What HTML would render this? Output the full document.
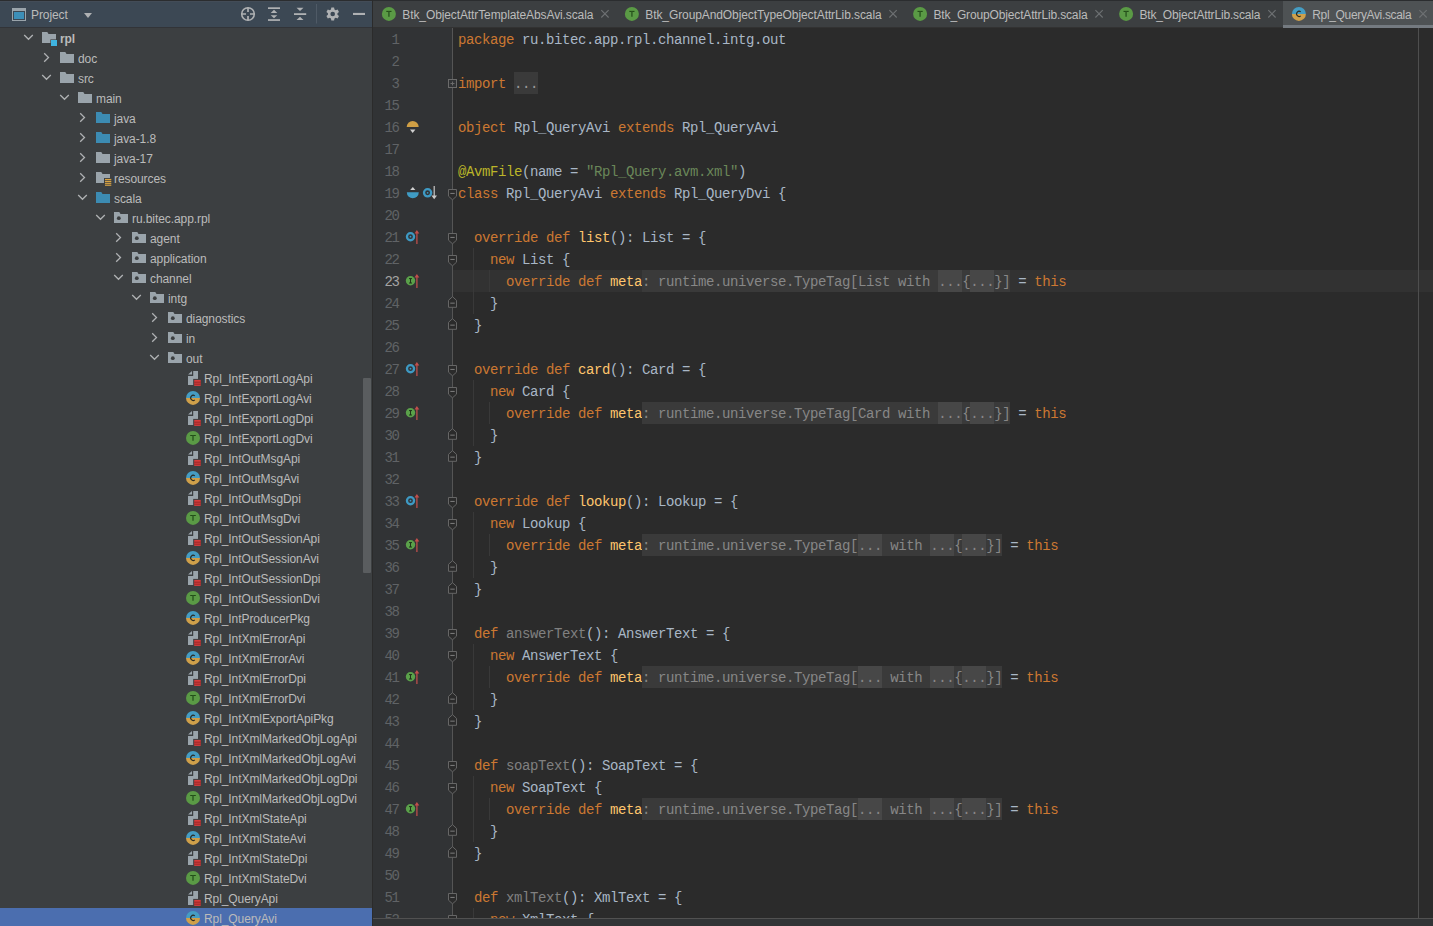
<!DOCTYPE html>
<html><head><meta charset="utf-8"><style>
*{margin:0;padding:0;box-sizing:border-box}
html,body{width:1433px;height:926px;overflow:hidden;background:#2b2b2b}
body{position:relative;font-family:"Liberation Sans",sans-serif}
.a{position:absolute}
.t{position:absolute;white-space:pre;font-size:12px;line-height:20px;color:#bbbbbb;letter-spacing:-0.08px}
.c{position:absolute;white-space:pre;font-family:"Liberation Mono",monospace;font-size:14px;letter-spacing:-0.4px;line-height:22px;color:#a9b7c6}
.ln{position:absolute;white-space:pre;font-family:"Liberation Mono",monospace;font-size:14px;letter-spacing:-1.3px;line-height:22px;color:#606366;text-align:right;width:40px}
.k{color:#cc7832} .m{color:#ffc66d} .u{color:#808080} .s{color:#6a8759} .an{color:#bbb529}
.ih{color:#878787;background:#3a3a3a}
.fd{color:#878787;background:#474747}
.fd0{color:#9a9a9a;background:#3a3a3a}
svg{position:absolute;overflow:visible}

.ih,.fd,.fd0{display:inline-block;height:21px;vertical-align:top}
.ih{box-shadow:0 -1px 0 #3a3a3a} .fd{box-shadow:0 -1px 0 #474747} .fd0{box-shadow:0 -1px 0 #3a3a3a}
</style></head><body>
<div class="a" style="left:0;top:0;width:372px;height:926px;background:#3c3f41"></div>
<div class="a" style="left:0;top:0;width:1433px;height:1px;background:#2b2d2f"></div>
<div class="a" style="left:0;top:1px;width:372px;height:26px;background:#3c4854"></div>
<div class="a" style="left:0;top:1px;width:372px;height:1px;background:#434c57"></div>
<div class="a" style="left:0;top:27px;width:372px;height:1px;background:#323438"></div>
<svg style="left:0;top:0" width="372" height="28">
<rect x="12.5" y="8.5" width="13" height="12" fill="none" stroke="#9aa4ab" stroke-width="1"/>
<rect x="12" y="8" width="14" height="3" fill="#9aa4ab"/>
<rect x="14" y="12" width="10" height="7" fill="#3d8fb8"/>
<path d="M84 13 L92 13 L88 18 Z" fill="#afb1b3"/>
<circle cx="248" cy="14" r="6.3" fill="none" stroke="#afb1b3" stroke-width="1.6"/>
<path d="M248 7.5 V12 M248 16 V20.5 M241.5 14 H246 M250 14 H254.5" stroke="#afb1b3" stroke-width="1.7"/>
<rect x="268" y="7.3" width="12" height="1.7" fill="#afb1b3"/>
<rect x="268" y="19.2" width="12" height="1.7" fill="#afb1b3"/>
<path d="M270.7 12.9 L274 9.8 L277.3 12.9 Z M270.7 15.2 L277.3 15.2 L274 18.3 Z" fill="#afb1b3"/>
<rect x="294" y="13.2" width="12.2" height="1.8" fill="#afb1b3"/>
<path d="M296.5 7.8 L303.5 7.8 L300 11 Z M296.5 20 L303.5 20 L300 16.7 Z" fill="#afb1b3"/>
<rect x="316" y="4" width="1" height="19.5" fill="#4f5a66"/>
<path fill="#afb1b3" fill-rule="evenodd" d=""/>
<rect x="353" y="12.9" width="12" height="2.1" fill="#afb1b3"/>
</svg>
<div class="t" style="left:31px;top:5px;color:#bbbbbb">Project</div>
<svg style="left:0;top:0" width="372" height="28"><path fill="#afb1b3" fill-rule="evenodd" d="M339.16 12.63 L339.16 15.37 L337.16 15.77 L336.46 16.98 L337.12 18.90 L334.74 20.28 L333.40 18.75 L332.00 18.75 L330.66 20.28 L328.28 18.90 L328.94 16.98 L328.24 15.77 L326.24 15.37 L326.24 12.63 L328.24 12.23 L328.94 11.02 L328.28 9.10 L330.66 7.72 L332.00 9.25 L333.40 9.25 L334.74 7.72 L337.12 9.10 L336.46 11.02 L337.16 12.23 Z M335.00 14 A2.3 2.3 0 1 0 330.40 14 A2.3 2.3 0 1 0 335.00 14 Z" transform="rotate(-90 332.7 14)"/></svg>
<div class="a" style="left:0;top:908px;width:372px;height:20px;background:#4b6eaf"></div>
<div class="t" style="left:60px;top:29px;font-weight:bold;">rpl</div>
<div class="t" style="left:78px;top:49px;">doc</div>
<div class="t" style="left:78px;top:69px;">src</div>
<div class="t" style="left:96px;top:89px;">main</div>
<div class="t" style="left:114px;top:109px;">java</div>
<div class="t" style="left:114px;top:129px;">java-1.8</div>
<div class="t" style="left:114px;top:149px;">java-17</div>
<div class="t" style="left:114px;top:169px;">resources</div>
<div class="t" style="left:114px;top:189px;">scala</div>
<div class="t" style="left:132px;top:209px;">ru.bitec.app.rpl</div>
<div class="t" style="left:150px;top:229px;">agent</div>
<div class="t" style="left:150px;top:249px;">application</div>
<div class="t" style="left:150px;top:269px;">channel</div>
<div class="t" style="left:168px;top:289px;">intg</div>
<div class="t" style="left:186px;top:309px;">diagnostics</div>
<div class="t" style="left:186px;top:329px;">in</div>
<div class="t" style="left:186px;top:349px;">out</div>
<div class="t" style="left:204px;top:369px;">Rpl_IntExportLogApi</div>
<div class="t" style="left:204px;top:389px;">Rpl_IntExportLogAvi</div>
<div class="t" style="left:204px;top:409px;">Rpl_IntExportLogDpi</div>
<div class="t" style="left:204px;top:429px;">Rpl_IntExportLogDvi</div>
<div class="t" style="left:204px;top:449px;">Rpl_IntOutMsgApi</div>
<div class="t" style="left:204px;top:469px;">Rpl_IntOutMsgAvi</div>
<div class="t" style="left:204px;top:489px;">Rpl_IntOutMsgDpi</div>
<div class="t" style="left:204px;top:509px;">Rpl_IntOutMsgDvi</div>
<div class="t" style="left:204px;top:529px;">Rpl_IntOutSessionApi</div>
<div class="t" style="left:204px;top:549px;">Rpl_IntOutSessionAvi</div>
<div class="t" style="left:204px;top:569px;">Rpl_IntOutSessionDpi</div>
<div class="t" style="left:204px;top:589px;">Rpl_IntOutSessionDvi</div>
<div class="t" style="left:204px;top:609px;">Rpl_IntProducerPkg</div>
<div class="t" style="left:204px;top:629px;">Rpl_IntXmlErrorApi</div>
<div class="t" style="left:204px;top:649px;">Rpl_IntXmlErrorAvi</div>
<div class="t" style="left:204px;top:669px;">Rpl_IntXmlErrorDpi</div>
<div class="t" style="left:204px;top:689px;">Rpl_IntXmlErrorDvi</div>
<div class="t" style="left:204px;top:709px;">Rpl_IntXmlExportApiPkg</div>
<div class="t" style="left:204px;top:729px;">Rpl_IntXmlMarkedObjLogApi</div>
<div class="t" style="left:204px;top:749px;">Rpl_IntXmlMarkedObjLogAvi</div>
<div class="t" style="left:204px;top:769px;">Rpl_IntXmlMarkedObjLogDpi</div>
<div class="t" style="left:204px;top:789px;">Rpl_IntXmlMarkedObjLogDvi</div>
<div class="t" style="left:204px;top:809px;">Rpl_IntXmlStateApi</div>
<div class="t" style="left:204px;top:829px;">Rpl_IntXmlStateAvi</div>
<div class="t" style="left:204px;top:849px;">Rpl_IntXmlStateDpi</div>
<div class="t" style="left:204px;top:869px;">Rpl_IntXmlStateDvi</div>
<div class="t" style="left:204px;top:889px;">Rpl_QueryApi</div>
<div class="t" style="left:204px;top:909px;">Rpl_QueryAvi</div>
<svg style="left:0;top:0" width="372" height="926"><path d="M24.2 35.0 L28.5 39.3 L32.8 35.0" fill="none" stroke="#afb1b3" stroke-width="1.3"/><g transform="translate(41,30)"><path d="M1 2 H6.3 L7.5 4 H15 V13 H1 Z" fill="#9aa4ab"/><rect x="9.4" y="9.4" width="7" height="7" fill="#3c3f41"/><rect x="10" y="10" width="6" height="6" fill="#3fb4e0"/></g><path d="M44.2 53.2 L48.5 57.5 L44.2 61.8" fill="none" stroke="#afb1b3" stroke-width="1.3"/><g transform="translate(59,50)"><path d="M1 2 H6.3 L7.5 4 H15 V13 H1 Z" fill="#9aa4ab"/></g><path d="M42.2 75.0 L46.5 79.3 L50.8 75.0" fill="none" stroke="#afb1b3" stroke-width="1.3"/><g transform="translate(59,70)"><path d="M1 2 H6.3 L7.5 4 H15 V13 H1 Z" fill="#9aa4ab"/></g><path d="M60.2 95.0 L64.5 99.3 L68.8 95.0" fill="none" stroke="#afb1b3" stroke-width="1.3"/><g transform="translate(77,90)"><path d="M1 2 H6.3 L7.5 4 H15 V13 H1 Z" fill="#9aa4ab"/></g><path d="M80.2 113.2 L84.5 117.5 L80.2 121.8" fill="none" stroke="#afb1b3" stroke-width="1.3"/><g transform="translate(95,110)"><path d="M1 2 H6.3 L7.5 4 H15 V13 H1 Z" fill="#3c8bb2"/></g><path d="M80.2 133.2 L84.5 137.5 L80.2 141.8" fill="none" stroke="#afb1b3" stroke-width="1.3"/><g transform="translate(95,130)"><path d="M1 2 H6.3 L7.5 4 H15 V13 H1 Z" fill="#3c8bb2"/></g><path d="M80.2 153.2 L84.5 157.5 L80.2 161.8" fill="none" stroke="#afb1b3" stroke-width="1.3"/><g transform="translate(95,150)"><path d="M1 2 H6.3 L7.5 4 H15 V13 H1 Z" fill="#9aa4ab"/></g><path d="M80.2 173.2 L84.5 177.5 L80.2 181.8" fill="none" stroke="#afb1b3" stroke-width="1.3"/><g transform="translate(95,170)"><path d="M1 2 H6.3 L7.5 4 H15 V13 H1 Z" fill="#9aa4ab"/><rect x="9" y="8" width="8" height="9" fill="#3c3f41"/><rect x="10" y="8.9" width="6.3" height="1.2" fill="#d9a343"/><rect x="10" y="10.8" width="6.3" height="1.2" fill="#d9a343"/><rect x="10" y="12.7" width="6.3" height="1.2" fill="#d9a343"/><rect x="10" y="14.6" width="6.3" height="1.2" fill="#d9a343"/></g><path d="M78.2 195.0 L82.5 199.3 L86.8 195.0" fill="none" stroke="#afb1b3" stroke-width="1.3"/><g transform="translate(95,190)"><path d="M1 2 H6.3 L7.5 4 H15 V13 H1 Z" fill="#3c8bb2"/></g><path d="M96.2 215.0 L100.5 219.3 L104.8 215.0" fill="none" stroke="#afb1b3" stroke-width="1.3"/><g transform="translate(113,210)"><path d="M1 2 H6.3 L7.5 4 H15 V13 H1 Z" fill="#9aa4ab"/><circle cx="5.8" cy="8.2" r="1.9" fill="#3c3f41"/></g><path d="M116.2 233.2 L120.5 237.5 L116.2 241.8" fill="none" stroke="#afb1b3" stroke-width="1.3"/><g transform="translate(131,230)"><path d="M1 2 H6.3 L7.5 4 H15 V13 H1 Z" fill="#9aa4ab"/><circle cx="5.8" cy="8.2" r="1.9" fill="#3c3f41"/></g><path d="M116.2 253.2 L120.5 257.5 L116.2 261.8" fill="none" stroke="#afb1b3" stroke-width="1.3"/><g transform="translate(131,250)"><path d="M1 2 H6.3 L7.5 4 H15 V13 H1 Z" fill="#9aa4ab"/><circle cx="5.8" cy="8.2" r="1.9" fill="#3c3f41"/></g><path d="M114.2 275.0 L118.5 279.3 L122.8 275.0" fill="none" stroke="#afb1b3" stroke-width="1.3"/><g transform="translate(131,270)"><path d="M1 2 H6.3 L7.5 4 H15 V13 H1 Z" fill="#9aa4ab"/><circle cx="5.8" cy="8.2" r="1.9" fill="#3c3f41"/></g><path d="M132.2 295.0 L136.5 299.3 L140.8 295.0" fill="none" stroke="#afb1b3" stroke-width="1.3"/><g transform="translate(149,290)"><path d="M1 2 H6.3 L7.5 4 H15 V13 H1 Z" fill="#9aa4ab"/><circle cx="5.8" cy="8.2" r="1.9" fill="#3c3f41"/></g><path d="M152.2 313.2 L156.5 317.5 L152.2 321.8" fill="none" stroke="#afb1b3" stroke-width="1.3"/><g transform="translate(167,310)"><path d="M1 2 H6.3 L7.5 4 H15 V13 H1 Z" fill="#9aa4ab"/><circle cx="5.8" cy="8.2" r="1.9" fill="#3c3f41"/></g><path d="M152.2 333.2 L156.5 337.5 L152.2 341.8" fill="none" stroke="#afb1b3" stroke-width="1.3"/><g transform="translate(167,330)"><path d="M1 2 H6.3 L7.5 4 H15 V13 H1 Z" fill="#9aa4ab"/><circle cx="5.8" cy="8.2" r="1.9" fill="#3c3f41"/></g><path d="M150.2 355.0 L154.5 359.3 L158.8 355.0" fill="none" stroke="#afb1b3" stroke-width="1.3"/><g transform="translate(167,350)"><path d="M1 2 H6.3 L7.5 4 H15 V13 H1 Z" fill="#9aa4ab"/><circle cx="5.8" cy="8.2" r="1.9" fill="#3c3f41"/></g><g transform="translate(185,370)"><path d="M8.2 1 H13 V15 H3 V5.9 H8.2 Z" fill="#9aa4ab"/><path d="M3.1 4.6 L7 1 V4.6 Z" fill="#9aa4ab"/><rect x="8.2" y="8.9" width="8.4" height="8" fill="#3c3f41"/><rect x="9.2" y="9.9" width="6.5" height="6" fill="#d83b3b"/><rect x="9.2" y="11.7" width="6.5" height="0.9" fill="#8e2525"/><rect x="9.2" y="13.7" width="6.5" height="0.9" fill="#8e2525"/></g><g transform="translate(185,390)"><path d="M1 7.9 A7 7 0 0 1 15 7.9 Z" fill="#459dc3"/><path d="M1 7.9 A7 7 0 0 0 15 7.9 Z" fill="#cfa04a"/><path d="M9.8 5.9 A2.5 2.6 0 1 0 9.8 9.9" fill="none" stroke="#2a2a22" stroke-width="1.1"/></g><g transform="translate(185,410)"><path d="M8.2 1 H13 V15 H3 V5.9 H8.2 Z" fill="#9aa4ab"/><path d="M3.1 4.6 L7 1 V4.6 Z" fill="#9aa4ab"/><rect x="8.2" y="8.9" width="8.4" height="8" fill="#3c3f41"/><rect x="9.2" y="9.9" width="6.5" height="6" fill="#d83b3b"/><rect x="9.2" y="11.7" width="6.5" height="0.9" fill="#8e2525"/><rect x="9.2" y="13.7" width="6.5" height="0.9" fill="#8e2525"/></g><g transform="translate(185,430)"><circle cx="8" cy="7.9" r="7" fill="#5a9a45"/><path d="M5.2 5.5 H10.8" stroke="#214a17" stroke-width="1.0"/><path d="M8 5.5 V10.7" stroke="#2f5f24" stroke-width="1.6"/></g><g transform="translate(185,450)"><path d="M8.2 1 H13 V15 H3 V5.9 H8.2 Z" fill="#9aa4ab"/><path d="M3.1 4.6 L7 1 V4.6 Z" fill="#9aa4ab"/><rect x="8.2" y="8.9" width="8.4" height="8" fill="#3c3f41"/><rect x="9.2" y="9.9" width="6.5" height="6" fill="#d83b3b"/><rect x="9.2" y="11.7" width="6.5" height="0.9" fill="#8e2525"/><rect x="9.2" y="13.7" width="6.5" height="0.9" fill="#8e2525"/></g><g transform="translate(185,470)"><path d="M1 7.9 A7 7 0 0 1 15 7.9 Z" fill="#459dc3"/><path d="M1 7.9 A7 7 0 0 0 15 7.9 Z" fill="#cfa04a"/><path d="M9.8 5.9 A2.5 2.6 0 1 0 9.8 9.9" fill="none" stroke="#2a2a22" stroke-width="1.1"/></g><g transform="translate(185,490)"><path d="M8.2 1 H13 V15 H3 V5.9 H8.2 Z" fill="#9aa4ab"/><path d="M3.1 4.6 L7 1 V4.6 Z" fill="#9aa4ab"/><rect x="8.2" y="8.9" width="8.4" height="8" fill="#3c3f41"/><rect x="9.2" y="9.9" width="6.5" height="6" fill="#d83b3b"/><rect x="9.2" y="11.7" width="6.5" height="0.9" fill="#8e2525"/><rect x="9.2" y="13.7" width="6.5" height="0.9" fill="#8e2525"/></g><g transform="translate(185,510)"><circle cx="8" cy="7.9" r="7" fill="#5a9a45"/><path d="M5.2 5.5 H10.8" stroke="#214a17" stroke-width="1.0"/><path d="M8 5.5 V10.7" stroke="#2f5f24" stroke-width="1.6"/></g><g transform="translate(185,530)"><path d="M8.2 1 H13 V15 H3 V5.9 H8.2 Z" fill="#9aa4ab"/><path d="M3.1 4.6 L7 1 V4.6 Z" fill="#9aa4ab"/><rect x="8.2" y="8.9" width="8.4" height="8" fill="#3c3f41"/><rect x="9.2" y="9.9" width="6.5" height="6" fill="#d83b3b"/><rect x="9.2" y="11.7" width="6.5" height="0.9" fill="#8e2525"/><rect x="9.2" y="13.7" width="6.5" height="0.9" fill="#8e2525"/></g><g transform="translate(185,550)"><path d="M1 7.9 A7 7 0 0 1 15 7.9 Z" fill="#459dc3"/><path d="M1 7.9 A7 7 0 0 0 15 7.9 Z" fill="#cfa04a"/><path d="M9.8 5.9 A2.5 2.6 0 1 0 9.8 9.9" fill="none" stroke="#2a2a22" stroke-width="1.1"/></g><g transform="translate(185,570)"><path d="M8.2 1 H13 V15 H3 V5.9 H8.2 Z" fill="#9aa4ab"/><path d="M3.1 4.6 L7 1 V4.6 Z" fill="#9aa4ab"/><rect x="8.2" y="8.9" width="8.4" height="8" fill="#3c3f41"/><rect x="9.2" y="9.9" width="6.5" height="6" fill="#d83b3b"/><rect x="9.2" y="11.7" width="6.5" height="0.9" fill="#8e2525"/><rect x="9.2" y="13.7" width="6.5" height="0.9" fill="#8e2525"/></g><g transform="translate(185,590)"><circle cx="8" cy="7.9" r="7" fill="#5a9a45"/><path d="M5.2 5.5 H10.8" stroke="#214a17" stroke-width="1.0"/><path d="M8 5.5 V10.7" stroke="#2f5f24" stroke-width="1.6"/></g><g transform="translate(185,610)"><path d="M1 7.9 A7 7 0 0 1 15 7.9 Z" fill="#459dc3"/><path d="M1 7.9 A7 7 0 0 0 15 7.9 Z" fill="#cfa04a"/><path d="M9.8 5.9 A2.5 2.6 0 1 0 9.8 9.9" fill="none" stroke="#2a2a22" stroke-width="1.1"/></g><g transform="translate(185,630)"><path d="M8.2 1 H13 V15 H3 V5.9 H8.2 Z" fill="#9aa4ab"/><path d="M3.1 4.6 L7 1 V4.6 Z" fill="#9aa4ab"/><rect x="8.2" y="8.9" width="8.4" height="8" fill="#3c3f41"/><rect x="9.2" y="9.9" width="6.5" height="6" fill="#d83b3b"/><rect x="9.2" y="11.7" width="6.5" height="0.9" fill="#8e2525"/><rect x="9.2" y="13.7" width="6.5" height="0.9" fill="#8e2525"/></g><g transform="translate(185,650)"><path d="M1 7.9 A7 7 0 0 1 15 7.9 Z" fill="#459dc3"/><path d="M1 7.9 A7 7 0 0 0 15 7.9 Z" fill="#cfa04a"/><path d="M9.8 5.9 A2.5 2.6 0 1 0 9.8 9.9" fill="none" stroke="#2a2a22" stroke-width="1.1"/></g><g transform="translate(185,670)"><path d="M8.2 1 H13 V15 H3 V5.9 H8.2 Z" fill="#9aa4ab"/><path d="M3.1 4.6 L7 1 V4.6 Z" fill="#9aa4ab"/><rect x="8.2" y="8.9" width="8.4" height="8" fill="#3c3f41"/><rect x="9.2" y="9.9" width="6.5" height="6" fill="#d83b3b"/><rect x="9.2" y="11.7" width="6.5" height="0.9" fill="#8e2525"/><rect x="9.2" y="13.7" width="6.5" height="0.9" fill="#8e2525"/></g><g transform="translate(185,690)"><circle cx="8" cy="7.9" r="7" fill="#5a9a45"/><path d="M5.2 5.5 H10.8" stroke="#214a17" stroke-width="1.0"/><path d="M8 5.5 V10.7" stroke="#2f5f24" stroke-width="1.6"/></g><g transform="translate(185,710)"><path d="M1 7.9 A7 7 0 0 1 15 7.9 Z" fill="#459dc3"/><path d="M1 7.9 A7 7 0 0 0 15 7.9 Z" fill="#cfa04a"/><path d="M9.8 5.9 A2.5 2.6 0 1 0 9.8 9.9" fill="none" stroke="#2a2a22" stroke-width="1.1"/></g><g transform="translate(185,730)"><path d="M8.2 1 H13 V15 H3 V5.9 H8.2 Z" fill="#9aa4ab"/><path d="M3.1 4.6 L7 1 V4.6 Z" fill="#9aa4ab"/><rect x="8.2" y="8.9" width="8.4" height="8" fill="#3c3f41"/><rect x="9.2" y="9.9" width="6.5" height="6" fill="#d83b3b"/><rect x="9.2" y="11.7" width="6.5" height="0.9" fill="#8e2525"/><rect x="9.2" y="13.7" width="6.5" height="0.9" fill="#8e2525"/></g><g transform="translate(185,750)"><path d="M1 7.9 A7 7 0 0 1 15 7.9 Z" fill="#459dc3"/><path d="M1 7.9 A7 7 0 0 0 15 7.9 Z" fill="#cfa04a"/><path d="M9.8 5.9 A2.5 2.6 0 1 0 9.8 9.9" fill="none" stroke="#2a2a22" stroke-width="1.1"/></g><g transform="translate(185,770)"><path d="M8.2 1 H13 V15 H3 V5.9 H8.2 Z" fill="#9aa4ab"/><path d="M3.1 4.6 L7 1 V4.6 Z" fill="#9aa4ab"/><rect x="8.2" y="8.9" width="8.4" height="8" fill="#3c3f41"/><rect x="9.2" y="9.9" width="6.5" height="6" fill="#d83b3b"/><rect x="9.2" y="11.7" width="6.5" height="0.9" fill="#8e2525"/><rect x="9.2" y="13.7" width="6.5" height="0.9" fill="#8e2525"/></g><g transform="translate(185,790)"><circle cx="8" cy="7.9" r="7" fill="#5a9a45"/><path d="M5.2 5.5 H10.8" stroke="#214a17" stroke-width="1.0"/><path d="M8 5.5 V10.7" stroke="#2f5f24" stroke-width="1.6"/></g><g transform="translate(185,810)"><path d="M8.2 1 H13 V15 H3 V5.9 H8.2 Z" fill="#9aa4ab"/><path d="M3.1 4.6 L7 1 V4.6 Z" fill="#9aa4ab"/><rect x="8.2" y="8.9" width="8.4" height="8" fill="#3c3f41"/><rect x="9.2" y="9.9" width="6.5" height="6" fill="#d83b3b"/><rect x="9.2" y="11.7" width="6.5" height="0.9" fill="#8e2525"/><rect x="9.2" y="13.7" width="6.5" height="0.9" fill="#8e2525"/></g><g transform="translate(185,830)"><path d="M1 7.9 A7 7 0 0 1 15 7.9 Z" fill="#459dc3"/><path d="M1 7.9 A7 7 0 0 0 15 7.9 Z" fill="#cfa04a"/><path d="M9.8 5.9 A2.5 2.6 0 1 0 9.8 9.9" fill="none" stroke="#2a2a22" stroke-width="1.1"/></g><g transform="translate(185,850)"><path d="M8.2 1 H13 V15 H3 V5.9 H8.2 Z" fill="#9aa4ab"/><path d="M3.1 4.6 L7 1 V4.6 Z" fill="#9aa4ab"/><rect x="8.2" y="8.9" width="8.4" height="8" fill="#3c3f41"/><rect x="9.2" y="9.9" width="6.5" height="6" fill="#d83b3b"/><rect x="9.2" y="11.7" width="6.5" height="0.9" fill="#8e2525"/><rect x="9.2" y="13.7" width="6.5" height="0.9" fill="#8e2525"/></g><g transform="translate(185,870)"><circle cx="8" cy="7.9" r="7" fill="#5a9a45"/><path d="M5.2 5.5 H10.8" stroke="#214a17" stroke-width="1.0"/><path d="M8 5.5 V10.7" stroke="#2f5f24" stroke-width="1.6"/></g><g transform="translate(185,890)"><path d="M8.2 1 H13 V15 H3 V5.9 H8.2 Z" fill="#9aa4ab"/><path d="M3.1 4.6 L7 1 V4.6 Z" fill="#9aa4ab"/><rect x="8.2" y="8.9" width="8.4" height="8" fill="#3c3f41"/><rect x="9.2" y="9.9" width="6.5" height="6" fill="#d83b3b"/><rect x="9.2" y="11.7" width="6.5" height="0.9" fill="#8e2525"/><rect x="9.2" y="13.7" width="6.5" height="0.9" fill="#8e2525"/></g><g transform="translate(185,910)"><path d="M1 7.9 A7 7 0 0 1 15 7.9 Z" fill="#459dc3"/><path d="M1 7.9 A7 7 0 0 0 15 7.9 Z" fill="#cfa04a"/><path d="M9.8 5.9 A2.5 2.6 0 1 0 9.8 9.9" fill="none" stroke="#2a2a22" stroke-width="1.1"/></g></svg>
<div class="a" style="left:363px;top:378px;width:8px;height:195px;background:#5a5d5f;border-radius:1px"></div>
<div class="a" style="left:372px;top:0;width:1px;height:926px;background:#2b2b2b"></div>
<div class="a" style="left:373px;top:1px;width:1060px;height:26px;background:#3c3f41"></div>
<div class="a" style="left:373px;top:27px;width:1060px;height:1px;background:#323232"></div>
<div class="a" style="left:1283px;top:1px;width:150px;height:24px;background:#4e5254"></div>
<div class="a" style="left:1283px;top:25px;width:150px;height:3px;background:#747a80"></div>
<div class="t" style="left:402.30px;top:5px;letter-spacing:-0.103px">Btk_ObjectAttrTemplateAbsAvi.scala</div>
<div class="t" style="left:645.30px;top:5px;letter-spacing:-0.095px">Btk_GroupAndObjectTypeObjectAttrLib.scala</div>
<div class="t" style="left:933.50px;top:5px;letter-spacing:-0.148px">Btk_GroupObjectAttrLib.scala</div>
<div class="t" style="left:1139.50px;top:5px;letter-spacing:-0.173px">Btk_ObjectAttrLib.scala</div>
<div class="t" style="left:1312.30px;top:5px;letter-spacing:-0.347px">Rpl_QueryAvi.scala</div>
<svg style="left:0;top:0" width="1433" height="28"><g transform="translate(380.90000000000003,5.9)"><circle cx="8" cy="8" r="7" fill="#5a9a45"/><path d="M5.4 5.5 H10.6" stroke="#214a17" stroke-width="1.1"/><path d="M8 5.5 V10.9" stroke="#2f5f24" stroke-width="1.6"/></g><path d="M601.3 10.2 L608.6 17.5 M608.6 10.2 L601.3 17.5" stroke="#6e7173" stroke-width="1.1"/><g transform="translate(623.9,5.9)"><circle cx="8" cy="8" r="7" fill="#5a9a45"/><path d="M5.4 5.5 H10.6" stroke="#214a17" stroke-width="1.1"/><path d="M8 5.5 V10.9" stroke="#2f5f24" stroke-width="1.6"/></g><path d="M889.4 10.2 L896.7 17.5 M896.7 10.2 L889.4 17.5" stroke="#6e7173" stroke-width="1.1"/><g transform="translate(912.1,5.9)"><circle cx="8" cy="8" r="7" fill="#5a9a45"/><path d="M5.4 5.5 H10.6" stroke="#214a17" stroke-width="1.1"/><path d="M8 5.5 V10.9" stroke="#2f5f24" stroke-width="1.6"/></g><path d="M1095.4 10.2 L1102.7 17.5 M1102.7 10.2 L1095.4 17.5" stroke="#6e7173" stroke-width="1.1"/><g transform="translate(1118.1,5.9)"><circle cx="8" cy="8" r="7" fill="#5a9a45"/><path d="M5.4 5.5 H10.6" stroke="#214a17" stroke-width="1.1"/><path d="M8 5.5 V10.9" stroke="#2f5f24" stroke-width="1.6"/></g><path d="M1268.3 10.2 L1275.6 17.5 M1275.6 10.2 L1268.3 17.5" stroke="#6e7173" stroke-width="1.1"/><g transform="translate(1290.8999999999999,5.9)"><path d="M1 8 A7 7 0 0 1 15 8 Z" fill="#459dc3"/><path d="M1 8 A7 7 0 0 0 15 8 Z" fill="#cfa04a"/><path d="M9.8 6 A2.5 2.6 0 1 0 9.8 10" fill="none" stroke="#2a2a22" stroke-width="1.1"/></g><path d="M1419.4 10.2 L1426.7 17.5 M1426.7 10.2 L1419.4 17.5" stroke="#6e7173" stroke-width="1.1"/></svg>
<div class="a" style="left:373px;top:28px;width:80px;height:890px;background:#313335"></div>
<div class="a" style="left:453px;top:270px;width:980px;height:22px;background:#323232"></div>
<div class="ln" style="left:358.6px;top:29px;color:#606366">1</div>
<div class="c" style="left:458px;top:29px"><span class="k">package</span> ru.bitec.app.rpl.channel.intg.out</div>
<div class="ln" style="left:358.6px;top:51px;color:#606366">2</div>
<div class="ln" style="left:358.6px;top:73px;color:#606366">3</div>
<div class="c" style="left:458px;top:73px"><span class="k">import</span> <span class="fd0">...</span></div>
<div class="ln" style="left:358.6px;top:95px;color:#606366">15</div>
<div class="ln" style="left:358.6px;top:117px;color:#606366">16</div>
<div class="c" style="left:458px;top:117px"><span class="k">object</span> Rpl_QueryAvi <span class="k">extends</span> Rpl_QueryAvi</div>
<div class="ln" style="left:358.6px;top:139px;color:#606366">17</div>
<div class="ln" style="left:358.6px;top:161px;color:#606366">18</div>
<div class="c" style="left:458px;top:161px"><span class="an">@AvmFile</span>(name = <span class="s">&quot;Rpl_Query.avm.xml&quot;</span>)</div>
<div class="ln" style="left:358.6px;top:183px;color:#606366">19</div>
<div class="c" style="left:458px;top:183px"><span class="k">class</span> Rpl_QueryAvi <span class="k">extends</span> Rpl_QueryDvi {</div>
<div class="ln" style="left:358.6px;top:205px;color:#606366">20</div>
<div class="ln" style="left:358.6px;top:227px;color:#606366">21</div>
<div class="c" style="left:458px;top:227px">  <span class="k">override def </span><span class="m">list</span>(): List = {</div>
<div class="ln" style="left:358.6px;top:249px;color:#606366">22</div>
<div class="c" style="left:458px;top:249px">    <span class="k">new</span> List {</div>
<div class="ln" style="left:358.6px;top:271px;color:#a4a3a3">23</div>
<div class="c" style="left:458px;top:271px">      <span class="k">override def </span><span class="m">meta</span><span class="ih">: runtime.universe.TypeTag[List with </span><span class="fd">...</span><span class="ih">{</span><span class="fd">...</span><span class="ih">}]</span> = <span class="k">this</span></div>
<div class="ln" style="left:358.6px;top:293px;color:#606366">24</div>
<div class="c" style="left:458px;top:293px">    }</div>
<div class="ln" style="left:358.6px;top:315px;color:#606366">25</div>
<div class="c" style="left:458px;top:315px">  }</div>
<div class="ln" style="left:358.6px;top:337px;color:#606366">26</div>
<div class="ln" style="left:358.6px;top:359px;color:#606366">27</div>
<div class="c" style="left:458px;top:359px">  <span class="k">override def </span><span class="m">card</span>(): Card = {</div>
<div class="ln" style="left:358.6px;top:381px;color:#606366">28</div>
<div class="c" style="left:458px;top:381px">    <span class="k">new</span> Card {</div>
<div class="ln" style="left:358.6px;top:403px;color:#606366">29</div>
<div class="c" style="left:458px;top:403px">      <span class="k">override def </span><span class="m">meta</span><span class="ih">: runtime.universe.TypeTag[Card with </span><span class="fd">...</span><span class="ih">{</span><span class="fd">...</span><span class="ih">}]</span> = <span class="k">this</span></div>
<div class="ln" style="left:358.6px;top:425px;color:#606366">30</div>
<div class="c" style="left:458px;top:425px">    }</div>
<div class="ln" style="left:358.6px;top:447px;color:#606366">31</div>
<div class="c" style="left:458px;top:447px">  }</div>
<div class="ln" style="left:358.6px;top:469px;color:#606366">32</div>
<div class="ln" style="left:358.6px;top:491px;color:#606366">33</div>
<div class="c" style="left:458px;top:491px">  <span class="k">override def </span><span class="m">lookup</span>(): Lookup = {</div>
<div class="ln" style="left:358.6px;top:513px;color:#606366">34</div>
<div class="c" style="left:458px;top:513px">    <span class="k">new</span> Lookup {</div>
<div class="ln" style="left:358.6px;top:535px;color:#606366">35</div>
<div class="c" style="left:458px;top:535px">      <span class="k">override def </span><span class="m">meta</span><span class="ih">: runtime.universe.TypeTag[</span><span class="fd">...</span><span class="ih"> with </span><span class="fd">...</span><span class="ih">{</span><span class="fd">...</span><span class="ih">}]</span> = <span class="k">this</span></div>
<div class="ln" style="left:358.6px;top:557px;color:#606366">36</div>
<div class="c" style="left:458px;top:557px">    }</div>
<div class="ln" style="left:358.6px;top:579px;color:#606366">37</div>
<div class="c" style="left:458px;top:579px">  }</div>
<div class="ln" style="left:358.6px;top:601px;color:#606366">38</div>
<div class="ln" style="left:358.6px;top:623px;color:#606366">39</div>
<div class="c" style="left:458px;top:623px">  <span class="k">def </span><span class="u">answerText</span>(): AnswerText = {</div>
<div class="ln" style="left:358.6px;top:645px;color:#606366">40</div>
<div class="c" style="left:458px;top:645px">    <span class="k">new</span> AnswerText {</div>
<div class="ln" style="left:358.6px;top:667px;color:#606366">41</div>
<div class="c" style="left:458px;top:667px">      <span class="k">override def </span><span class="m">meta</span><span class="ih">: runtime.universe.TypeTag[</span><span class="fd">...</span><span class="ih"> with </span><span class="fd">...</span><span class="ih">{</span><span class="fd">...</span><span class="ih">}]</span> = <span class="k">this</span></div>
<div class="ln" style="left:358.6px;top:689px;color:#606366">42</div>
<div class="c" style="left:458px;top:689px">    }</div>
<div class="ln" style="left:358.6px;top:711px;color:#606366">43</div>
<div class="c" style="left:458px;top:711px">  }</div>
<div class="ln" style="left:358.6px;top:733px;color:#606366">44</div>
<div class="ln" style="left:358.6px;top:755px;color:#606366">45</div>
<div class="c" style="left:458px;top:755px">  <span class="k">def </span><span class="u">soapText</span>(): SoapText = {</div>
<div class="ln" style="left:358.6px;top:777px;color:#606366">46</div>
<div class="c" style="left:458px;top:777px">    <span class="k">new</span> SoapText {</div>
<div class="ln" style="left:358.6px;top:799px;color:#606366">47</div>
<div class="c" style="left:458px;top:799px">      <span class="k">override def </span><span class="m">meta</span><span class="ih">: runtime.universe.TypeTag[</span><span class="fd">...</span><span class="ih"> with </span><span class="fd">...</span><span class="ih">{</span><span class="fd">...</span><span class="ih">}]</span> = <span class="k">this</span></div>
<div class="ln" style="left:358.6px;top:821px;color:#606366">48</div>
<div class="c" style="left:458px;top:821px">    }</div>
<div class="ln" style="left:358.6px;top:843px;color:#606366">49</div>
<div class="c" style="left:458px;top:843px">  }</div>
<div class="ln" style="left:358.6px;top:865px;color:#606366">50</div>
<div class="ln" style="left:358.6px;top:887px;color:#606366">51</div>
<div class="c" style="left:458px;top:887px">  <span class="k">def </span><span class="u">xmlText</span>(): XmlText = {</div>
<div class="ln" style="left:358.6px;top:909px;color:#606366">52</div>
<div class="c" style="left:458px;top:909px">    <span class="k">new</span> XmlText {</div>
<svg style="left:0;top:0" width="1433" height="926"><rect x="452" y="28" width="1" height="890" fill="#555555"/><rect x="448.5" y="79.5" width="8" height="8" fill="#313335" stroke="#6b6b6b"/><path d="M450.5 83.5 H454.5 M452.5 81.5 V85.5" stroke="#6b6b6b"/><path d="M448.5 189.5 H456.5 V196.2 L452.5 199.8 L448.5 196.2 Z" fill="#2b2b2b" stroke="#666" stroke-width="1"/><rect x="450.3" y="192.9" width="4.4" height="1.1" fill="#777"/><path d="M448.5 233.5 H456.5 V240.2 L452.5 243.8 L448.5 240.2 Z" fill="#2b2b2b" stroke="#666" stroke-width="1"/><rect x="450.3" y="236.9" width="4.4" height="1.1" fill="#777"/><path d="M448.5 255.5 H456.5 V262.2 L452.5 265.8 L448.5 262.2 Z" fill="#2b2b2b" stroke="#666" stroke-width="1"/><rect x="450.3" y="258.9" width="4.4" height="1.1" fill="#777"/><path d="M448.5 307.3 H456.5 V300.3 L452.5 296.7 L448.5 300.3 Z" fill="#2b2b2b" stroke="#666" stroke-width="1"/><rect x="450.3" y="302.6" width="4.4" height="1.1" fill="#777"/><path d="M448.5 329.3 H456.5 V322.3 L452.5 318.7 L448.5 322.3 Z" fill="#2b2b2b" stroke="#666" stroke-width="1"/><rect x="450.3" y="324.6" width="4.4" height="1.1" fill="#777"/><rect x="473" y="248" width="1" height="66" fill="#393939"/><rect x="489" y="270" width="1" height="22" fill="#393939"/><path d="M448.5 365.5 H456.5 V372.2 L452.5 375.8 L448.5 372.2 Z" fill="#2b2b2b" stroke="#666" stroke-width="1"/><rect x="450.3" y="368.9" width="4.4" height="1.1" fill="#777"/><path d="M448.5 387.5 H456.5 V394.2 L452.5 397.8 L448.5 394.2 Z" fill="#2b2b2b" stroke="#666" stroke-width="1"/><rect x="450.3" y="390.9" width="4.4" height="1.1" fill="#777"/><path d="M448.5 439.3 H456.5 V432.3 L452.5 428.7 L448.5 432.3 Z" fill="#2b2b2b" stroke="#666" stroke-width="1"/><rect x="450.3" y="434.6" width="4.4" height="1.1" fill="#777"/><path d="M448.5 461.3 H456.5 V454.3 L452.5 450.7 L448.5 454.3 Z" fill="#2b2b2b" stroke="#666" stroke-width="1"/><rect x="450.3" y="456.6" width="4.4" height="1.1" fill="#777"/><rect x="473" y="380" width="1" height="66" fill="#393939"/><rect x="489" y="402" width="1" height="22" fill="#393939"/><path d="M448.5 497.5 H456.5 V504.2 L452.5 507.8 L448.5 504.2 Z" fill="#2b2b2b" stroke="#666" stroke-width="1"/><rect x="450.3" y="500.9" width="4.4" height="1.1" fill="#777"/><path d="M448.5 519.5 H456.5 V526.2 L452.5 529.8 L448.5 526.2 Z" fill="#2b2b2b" stroke="#666" stroke-width="1"/><rect x="450.3" y="522.9" width="4.4" height="1.1" fill="#777"/><path d="M448.5 571.3 H456.5 V564.3 L452.5 560.7 L448.5 564.3 Z" fill="#2b2b2b" stroke="#666" stroke-width="1"/><rect x="450.3" y="566.6" width="4.4" height="1.1" fill="#777"/><path d="M448.5 593.3 H456.5 V586.3 L452.5 582.7 L448.5 586.3 Z" fill="#2b2b2b" stroke="#666" stroke-width="1"/><rect x="450.3" y="588.6" width="4.4" height="1.1" fill="#777"/><rect x="473" y="512" width="1" height="66" fill="#393939"/><rect x="489" y="534" width="1" height="22" fill="#393939"/><path d="M448.5 629.5 H456.5 V636.2 L452.5 639.8 L448.5 636.2 Z" fill="#2b2b2b" stroke="#666" stroke-width="1"/><rect x="450.3" y="632.9" width="4.4" height="1.1" fill="#777"/><path d="M448.5 651.5 H456.5 V658.2 L452.5 661.8 L448.5 658.2 Z" fill="#2b2b2b" stroke="#666" stroke-width="1"/><rect x="450.3" y="654.9" width="4.4" height="1.1" fill="#777"/><path d="M448.5 703.3 H456.5 V696.3 L452.5 692.7 L448.5 696.3 Z" fill="#2b2b2b" stroke="#666" stroke-width="1"/><rect x="450.3" y="698.6" width="4.4" height="1.1" fill="#777"/><path d="M448.5 725.3 H456.5 V718.3 L452.5 714.7 L448.5 718.3 Z" fill="#2b2b2b" stroke="#666" stroke-width="1"/><rect x="450.3" y="720.6" width="4.4" height="1.1" fill="#777"/><rect x="473" y="644" width="1" height="66" fill="#393939"/><rect x="489" y="666" width="1" height="22" fill="#393939"/><path d="M448.5 761.5 H456.5 V768.2 L452.5 771.8 L448.5 768.2 Z" fill="#2b2b2b" stroke="#666" stroke-width="1"/><rect x="450.3" y="764.9" width="4.4" height="1.1" fill="#777"/><path d="M448.5 783.5 H456.5 V790.2 L452.5 793.8 L448.5 790.2 Z" fill="#2b2b2b" stroke="#666" stroke-width="1"/><rect x="450.3" y="786.9" width="4.4" height="1.1" fill="#777"/><path d="M448.5 835.3 H456.5 V828.3 L452.5 824.7 L448.5 828.3 Z" fill="#2b2b2b" stroke="#666" stroke-width="1"/><rect x="450.3" y="830.6" width="4.4" height="1.1" fill="#777"/><path d="M448.5 857.3 H456.5 V850.3 L452.5 846.7 L448.5 850.3 Z" fill="#2b2b2b" stroke="#666" stroke-width="1"/><rect x="450.3" y="852.6" width="4.4" height="1.1" fill="#777"/><rect x="473" y="776" width="1" height="66" fill="#393939"/><rect x="489" y="798" width="1" height="22" fill="#393939"/><path d="M448.5 893.5 H456.5 V900.2 L452.5 903.8 L448.5 900.2 Z" fill="#2b2b2b" stroke="#666" stroke-width="1"/><rect x="450.3" y="896.9" width="4.4" height="1.1" fill="#777"/><path d="M448.5 915.5 H456.5 V922.2 L452.5 925.8 L448.5 922.2 Z" fill="#2b2b2b" stroke="#666" stroke-width="1"/><rect x="450.3" y="918.9" width="4.4" height="1.1" fill="#777"/><rect x="473" y="908" width="1" height="10" fill="#393939"/></svg>
<svg style="left:0;top:0" width="1433" height="926"><path d="M406.7 126.9 A6 6 0 0 1 418.7 126.9 Z" fill="#cf9f45"/><path d="M410 129.6 L415.4 129.6 L412.7 133 Z" fill="#d0d0d0"/><path d="M406.8 192.3 A6 6 0 0 0 418.8 192.3 Z" fill="#3f9cc4"/><path d="M410.2 190 L415.4 190 L412.8 187 Z" fill="#d0d0d0"/><circle cx="427.6" cy="192.8" r="3.6" fill="none" stroke="#3e9ac4" stroke-width="2.3"/><circle cx="427.6" cy="192.8" r="0.9" fill="#3e9ac4"/><path d="M434.2 186 V198" stroke="#c8c8c8" stroke-width="1.2"/><path d="M431.4 195.5 L437 195.5 L434.2 199.3 Z" fill="#c8c8c8"/><circle cx="410.5" cy="236.7" r="3.55" fill="none" stroke="#3e9ac4" stroke-width="2.3"/><circle cx="410.5" cy="236.7" r="0.9" fill="#3e9ac4"/><path d="M416.9 233 V244" stroke="#c24f4c" stroke-width="1.25"/><path d="M414.5 233.6 L419.3 233.6 L416.9 230 Z" fill="#c24f4c"/><circle cx="410.5" cy="368.7" r="3.55" fill="none" stroke="#3e9ac4" stroke-width="2.3"/><circle cx="410.5" cy="368.7" r="0.9" fill="#3e9ac4"/><path d="M416.9 365 V376" stroke="#c24f4c" stroke-width="1.25"/><path d="M414.5 365.6 L419.3 365.6 L416.9 362 Z" fill="#c24f4c"/><circle cx="410.5" cy="500.7" r="3.55" fill="none" stroke="#3e9ac4" stroke-width="2.3"/><circle cx="410.5" cy="500.7" r="0.9" fill="#3e9ac4"/><path d="M416.9 497 V508" stroke="#c24f4c" stroke-width="1.25"/><path d="M414.5 497.6 L419.3 497.6 L416.9 494 Z" fill="#c24f4c"/><circle cx="410.5" cy="280.8" r="4.7" fill="#5aa14a"/><path d="M409 278.6 H412 M410.5 278.6 V283 M409 283 H412" stroke="#1e3318" stroke-width="1"/><path d="M416.9 277 V288" stroke="#c24f4c" stroke-width="1.25"/><path d="M414.5 277.6 L419.3 277.6 L416.9 274 Z" fill="#c24f4c"/><circle cx="410.5" cy="412.8" r="4.7" fill="#5aa14a"/><path d="M409 410.6 H412 M410.5 410.6 V415 M409 415 H412" stroke="#1e3318" stroke-width="1"/><path d="M416.9 409 V420" stroke="#c24f4c" stroke-width="1.25"/><path d="M414.5 409.6 L419.3 409.6 L416.9 406 Z" fill="#c24f4c"/><circle cx="410.5" cy="544.8" r="4.7" fill="#5aa14a"/><path d="M409 542.6 H412 M410.5 542.6 V547 M409 547 H412" stroke="#1e3318" stroke-width="1"/><path d="M416.9 541 V552" stroke="#c24f4c" stroke-width="1.25"/><path d="M414.5 541.6 L419.3 541.6 L416.9 538 Z" fill="#c24f4c"/><circle cx="410.5" cy="676.8" r="4.7" fill="#5aa14a"/><path d="M409 674.6 H412 M410.5 674.6 V679 M409 679 H412" stroke="#1e3318" stroke-width="1"/><path d="M416.9 673 V684" stroke="#c24f4c" stroke-width="1.25"/><path d="M414.5 673.6 L419.3 673.6 L416.9 670 Z" fill="#c24f4c"/><circle cx="410.5" cy="808.8" r="4.7" fill="#5aa14a"/><path d="M409 806.6 H412 M410.5 806.6 V811 M409 811 H412" stroke="#1e3318" stroke-width="1"/><path d="M416.9 805 V816" stroke="#c24f4c" stroke-width="1.25"/><path d="M414.5 805.6 L419.3 805.6 L416.9 802 Z" fill="#c24f4c"/></svg>
<div class="a" style="left:1418px;top:28px;width:1px;height:890px;background:#4e4e4e"></div>
<div class="a" style="left:373px;top:918px;width:1060px;height:1px;background:#515151"></div>
<div class="a" style="left:373px;top:919px;width:1060px;height:7px;background:#323436"></div>
</body></html>
